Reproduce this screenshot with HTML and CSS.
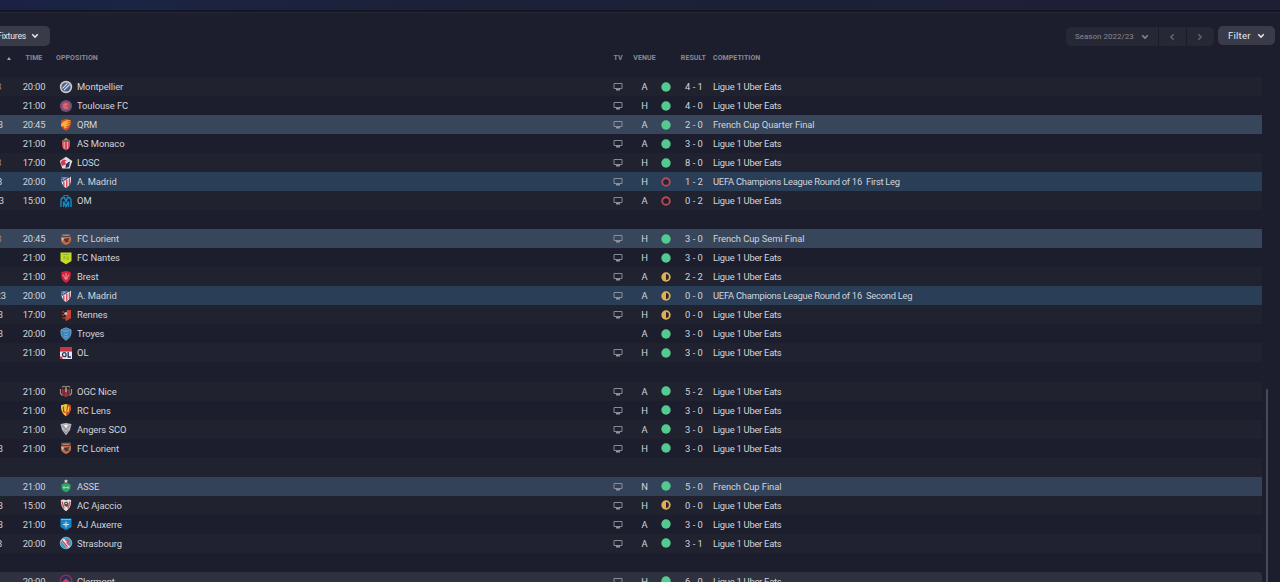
FILE: index.html
```html
<!DOCTYPE html>
<html lang="en">
<head>
<meta charset="utf-8">
<title>Fixtures</title>
<link rel="stylesheet" href="styles.css">
</head>
<body>
<svg class="defs" aria-hidden="true">
<symbol id="tv" viewBox="0 0 10 9"><path d="M1 1.500h8v5H1z" fill="none" stroke="#92959f" stroke-width=".9"/><path d="M3 7h4v1.500H3z" fill="#92959f"/></symbol>
<symbol id="down" viewBox="0 0 8 6"><path d="M1.200 1.300 4 4.100 6.800 1.300" fill="none" stroke="currentColor" stroke-width="1.500"/></symbol>
<symbol id="win" viewBox="0 0 10 10"><circle cx="5" cy="5" r="4.700" fill="#54ca90"/></symbol>
<symbol id="loss" viewBox="0 0 10 10"><circle cx="5" cy="5" r="3.800" fill="#1d1e2f" fill-opacity=".7" stroke="#b94a55" stroke-width="1.900"/></symbol>
<symbol id="draw" viewBox="0 0 10 10"><circle cx="5" cy="5" r="4.700" fill="#dfae55"/><path d="M5 2.100a2.900 2.900 0 0 1 0 5.800z" fill="#29252b"/></symbol>
<symbol id="mon" viewBox="0 0 14 14"><circle cx="7" cy="7" r="6.200" fill="#cfc8c3"/><circle cx="7" cy="7" r="4.600" fill="#3f628f"/><path d="m3.500 8.300 5-5M5 10.200l5.500-5.500" stroke="#e5e3e2" stroke-width="1.100"/></symbol>
<symbol id="tou" viewBox="0 0 14 14"><circle cx="7" cy="7" r="6.100" fill="#66547b"/><circle cx="7" cy="7" r="4.100" fill="#c4435b"/><path d="M5 5h4M5 5v4h4M7 5v3" fill="none" stroke="#df8c9f" stroke-width=".8"/></symbol>
<symbol id="qrm" viewBox="0 0 14 14"><path d="M2 2.500 7 .8l5 1.500c.2 5-1.200 8.600-5 10.500C3 11.200 1.600 7.500 2 2.500z" fill="#db4727"/><path d="M2 6.500C4 3 7 1.500 12 2L7.500 4.200l5 .2-6 2 5.500.1-6 2.500 3.500.5-4.500 1 .2-2.300-3 .3z" fill="#f3b53a"/></symbol>
<symbol id="mco" viewBox="0 0 14 14"><path d="M4.500 3 7 .7 9.500 3z" fill="#b79d55"/><path d="M3 3h8v5c0 2.800-2 4.500-4 5.500C5 12.500 3 10.800 3 8z" fill="#d8475a"/><path d="M5.200 5v7M8.600 5v7" stroke="#f1b2b5"/><path d="M3 3h8v1.800H3z" fill="#667050"/></symbol>
<symbol id="los" viewBox="0 0 14 14"><path d="M7 .8 13.300 5l-2.600 7.600H3.300L.7 5z" fill="#dfdce8"/><path d="m1.500 6 3-2.500L7 4l1 2-1.500 2.500L3 10z" fill="#d8384d"/><path d="m7 7 4-1.500-1 5.500-3.500 1z" fill="#293455"/><path d="m6 5 3 1-2 2z" fill="#fff"/></symbol>
<symbol id="atm" viewBox="0 0 14 14"><path d="M2.500 2 10.500 3 12 1.500v5c-.5 3-2.500 5-5 6.500-2.500-1.500-4.500-4-4.500-7z" fill="#eee7ec"/><path d="M2 1.500 9.500 3.500 3 7z" fill="#3a5495"/><path d="M4.800 6.500v5M7.800 5v7.500M10.500 3.500V10" stroke="#d64050" stroke-width="1.400"/><path d="m3.500 2.800 3 1M3.500 4.700h1.500" stroke="#dbe1f4" stroke-width=".7"/></symbol>
<symbol id="om" viewBox="0 0 14 14"><path d="M2 13V7.500C2 4.500 3.800 3.200 5.300 3.200L7 7.500l1.700-4.300C10.200 3.200 12 4.500 12 7.500V13M4.600 13V7.500L7 12.500l2.400-5V13" fill="none" stroke="#1490c8" stroke-width="1.400"/><path d="M4.500 1.500h5" stroke="#817650" stroke-width=".8"/></symbol>
<symbol id="lor" viewBox="0 0 14 14"><path d="M2 2h10v6c0 2.500-2.500 4-5 5-2.500-1-5-2.500-5-5z" fill="#c96d40"/><path d="M2 1.500h10V5H2z" fill="#57454b"/><path d="M3.500 3.200h7" stroke="#b9aaa3"/><path d="m4.500 7 6-1-1.500 2.500 1.500 1-4 1z" fill="#453a40"/><path d="m2.500 6 2.500.5L3.500 9z" fill="#e8caa5"/></symbol>
<symbol id="nan" viewBox="0 0 14 14"><path d="M1.500 1.500h11v8.500L7 13.300 1.500 10z" fill="#c6dc20"/><path d="M5 9V5l4 4V5M4 3.500h6" fill="none" stroke="#8aae26" stroke-width=".9"/></symbol>
<symbol id="bre" viewBox="0 0 14 14"><path d="M2.500 2 7 1l4.500 1c.8 5-.4 8.500-4.500 11-4.100-2.500-5.300-6-4.500-11z" fill="#d4243b"/><path d="M7 3v7M4 4.500 5.500 7M10 4.500 8.500 7M5 8h4" stroke="#f0b9bf" stroke-width=".8"/></symbol>
<symbol id="ren" viewBox="0 0 14 14"><path d="M1.500 1.500h11L12 10l-5 3.300L2 10z" fill="#242126"/><path d="M8 2h4v8l-5 3.300-1-3z" fill="#c84334"/><path d="M3 4h2M3 7h2M3.500 10h4" stroke="#a5392e" stroke-width="1.400"/><circle cx="6.800" cy="5.500" r="1.600" fill="#d4b5a5"/></symbol>
<symbol id="tro" viewBox="0 0 14 14"><path d="M2 2.800 7 .8l5 2c.5 5-1 8-5 10.500-4-2.500-5.500-5.500-5-10.500z" fill="#3a83bb" stroke="#89aac5" stroke-width=".8"/><path d="M4 4h6M5 6.500 7 8l2-1.500M5 10h4" fill="none" stroke="#75b6dc" stroke-width=".9"/></symbol>
<symbol id="ol" viewBox="0 0 14 14"><path d="M1 1h12v4.500H1z" fill="#c83545"/><path d="M1 5.500h12V13H1z" fill="#e8e8ed"/><ellipse cx="5.300" cy="8.700" rx="1.800" ry="2" fill="none" stroke="#29395b" stroke-width="1.300"/><path d="M9.200 6v5h2.800" fill="none" stroke="#29395b" stroke-width="1.400"/><path d="M1 10.500h2.500V13H1z" fill="#c83545"/></symbol>
<symbol id="nic" viewBox="0 0 14 14"><path d="M3 5h8v4.500c-.5 2-2 3-4 3.500-2-.5-3.500-1.500-4-3.500z" fill="#a3323c"/><path d="M3 3.500Q5 1 7 3.500 9 1 11 3.500M1.500 5v4.500l2 2M12.500 5v4.500l-2 2" fill="none" stroke="#a58f80" stroke-width="1.200"/><path d="M5 5v6M9 5v6" stroke="#332a30"/><path d="M7 4v4" stroke="#cbb49a" stroke-width="1.200"/></symbol>
<symbol id="len" viewBox="0 0 14 14"><path d="M2 2.200 7 1l5 1.200c.2 5-1.300 8.500-5 11-3.700-2.500-5.200-6-5-11z" fill="#efcd32"/><path d="M8 1.300 12 2.200c.2 5-1.500 9-5 11z" fill="#d43a35"/><path d="M4.500 3.500v5l2 1" fill="none" stroke="#c72e30" stroke-width="1.300"/><path d="M10 3.500 8.800 9" stroke="#f0d34a" stroke-width="1.300"/></symbol>
<symbol id="ang" viewBox="0 0 14 14"><path d="M1.500 2 7 1l5.500 1L11 8l-4 5.300L3 8z" fill="#babac0"/><path d="m3 3 4 5 4-5M4.500 8 7 11l2.500-3" fill="none" stroke="#7b7a84" stroke-width=".8"/><path d="M5 3h4L7 6z" fill="#f0f0ed"/></symbol>
<symbol id="ass" viewBox="0 0 14 14"><path d="m7 .2.700 1.300 1.500.1L8 2.600 8.400 4 7 3.300 5.600 4 6 2.600 4.800 1.600l1.500-.1z" fill="#e4ded1"/><path d="M2.500 5.500Q7 2.800 11.500 5.500v4Q10.500 12 7 13.300 3.500 12 2.500 9.500z" fill="#30a463"/><path d="M5 7v3M9 7v3M4 8.500h6" stroke="#9de0b7" stroke-width=".9"/></symbol>
<symbol id="aja" viewBox="0 0 14 14"><path d="M1.800 2.300Q4 .8 7 2.300q3-1.500 5.200 0c0 5.500-1.700 8.700-5.200 11-3.500-2.300-5.200-5.500-5.200-11z" fill="#e4dcdc"/><path d="m3 3.500 2 7M11 3.500l-2 7" stroke="#d34b50" stroke-width="1.300"/><path d="m5 4.500 3-1 1.500 2-1 3.500-3-1z" fill="#5a4a52"/><path d="M6 5.500h2" stroke="#e4dcdc" stroke-width=".8"/></symbol>
<symbol id="aux" viewBox="0 0 14 14"><path d="M1.500 1.500h11V10L7 13.300 1.500 10z" fill="#1683c2"/><path d="M2 2.500h10" stroke="#7fb9d8"/><path d="M7 4.500v6M4 7.500h6" stroke="#dceef7" stroke-width=".9"/><path d="m5.200 5.700 3.600 3.600m0-3.600L5.200 9.300" stroke="#b0d8ed" stroke-width=".6"/></symbol>
<symbol id="str" viewBox="0 0 14 14"><circle cx="7" cy="7" r="5.800" fill="#36a2cb" stroke="#8cc3d9" stroke-width=".8"/><path d="M2 4.500 8 12l3-1-6-8.500z" fill="#e9e6ec"/><path d="m3 4.500 5.500 6.500M7 4.500h2.500V6L8 7l2 2" fill="none" stroke="#d6485d" stroke-width="1.200"/></symbol>
<symbol id="cle" viewBox="0 0 14 14"><circle cx="7" cy="7" r="5.800" fill="#27315f" stroke="#9c2b56" stroke-width="1.300"/><path d="M3 8 7 4.500 11 8v3H3z" fill="#d93b51"/></symbol>
</svg>
<header class="topbar"></header>
<div class="toolbar">
  <button class="btn fixtures">Fixtures<svg class="chev"><use href="#down"/></svg></button>
  <div class="tools">
    <div class="season"><span class="pick">Season 2022/23<svg class="chev"><use href="#down"/></svg></span><span class="step"><svg class="chev left"><use href="#down"/></svg></span><span class="step"><svg class="chev right"><use href="#down"/></svg></span></div>
    <button class="btn filter">Filter<svg class="chev"><use href="#down"/></svg></button>
  </div>
</div>
<div class="grid head"><i class="sort"></i><span>TIME</span><span class="wide">OPPOSITION</span><span>TV</span><span class="venue">VENUE</span><i></i><span class="result">RESULT</span><span class="comp">COMPETITION</span></div>
<main class="rows">
<div class="grid row"><b class="d1 warm">3</b><span class="t">20:00</span><svg class="crest"><use href="#mon"/></svg><span class="name">Montpellier</span><svg class="tv"><use href="#tv"/></svg><span>A</span><svg class="dot"><use href="#win"/></svg><span>4 - 1</span><span class="comp">Ligue 1 Uber Eats</span></div>
<div class="grid row"><b></b><span class="t">21:00</span><svg class="crest"><use href="#tou"/></svg><span class="name">Toulouse FC</span><svg class="tv"><use href="#tv"/></svg><span>H</span><svg class="dot"><use href="#win"/></svg><span>4 - 0</span><span class="comp">Ligue 1 Uber Eats</span></div>
<div class="grid row cup"><b class="d3">3</b><span class="t">20:45</span><svg class="crest"><use href="#qrm"/></svg><span class="name">QRM</span><svg class="tv"><use href="#tv"/></svg><span>A</span><svg class="dot"><use href="#win"/></svg><span>2 - 0</span><span class="comp">French Cup Quarter Final</span></div>
<div class="grid row"><b></b><span class="t">21:00</span><svg class="crest"><use href="#mco"/></svg><span class="name">AS Monaco</span><svg class="tv"><use href="#tv"/></svg><span>A</span><svg class="dot"><use href="#win"/></svg><span>3 - 0</span><span class="comp">Ligue 1 Uber Eats</span></div>
<div class="grid row"><b class="d1 warm">3</b><span class="t">17:00</span><svg class="crest"><use href="#los"/></svg><span class="name">LOSC</span><svg class="tv"><use href="#tv"/></svg><span>H</span><svg class="dot"><use href="#win"/></svg><span>8 - 0</span><span class="comp">Ligue 1 Uber Eats</span></div>
<div class="grid row euro"><b class="d2">3</b><span class="t">20:00</span><svg class="crest"><use href="#atm"/></svg><span class="name">A. Madrid</span><svg class="tv"><use href="#tv"/></svg><span>H</span><svg class="dot"><use href="#loss"/></svg><span>1 - 2</span><span class="comp">UEFA Champions League Round of 16&nbsp; First Leg</span></div>
<div class="grid row"><b class="d4">3</b><span class="t">15:00</span><svg class="crest"><use href="#om"/></svg><span class="name">OM</span><svg class="tv"><use href="#tv"/></svg><span>A</span><svg class="dot"><use href="#loss"/></svg><span>0 - 2</span><span class="comp">Ligue 1 Uber Eats</span></div>
<div class="grid row"></div>
<div class="grid row cup"><b class="d1 warm">3</b><span class="t">20:45</span><svg class="crest"><use href="#lor"/></svg><span class="name">FC Lorient</span><svg class="tv"><use href="#tv"/></svg><span>H</span><svg class="dot"><use href="#win"/></svg><span>3 - 0</span><span class="comp">French Cup Semi Final</span></div>
<div class="grid row"><b></b><span class="t">21:00</span><svg class="crest"><use href="#nan"/></svg><span class="name">FC Nantes</span><svg class="tv"><use href="#tv"/></svg><span>H</span><svg class="dot"><use href="#win"/></svg><span>3 - 0</span><span class="comp">Ligue 1 Uber Eats</span></div>
<div class="grid row"><b></b><span class="t">21:00</span><svg class="crest"><use href="#bre"/></svg><span class="name">Brest</span><svg class="tv"><use href="#tv"/></svg><span>A</span><svg class="dot"><use href="#draw"/></svg><span>2 - 2</span><span class="comp">Ligue 1 Uber Eats</span></div>
<div class="grid row euro"><b class="d6">23</b><span class="t">20:00</span><svg class="crest"><use href="#atm"/></svg><span class="name">A. Madrid</span><svg class="tv"><use href="#tv"/></svg><span>A</span><svg class="dot"><use href="#draw"/></svg><span>0 - 0</span><span class="comp">UEFA Champions League Round of 16&nbsp; Second Leg</span></div>
<div class="grid row"><b class="d3">3</b><span class="t">17:00</span><svg class="crest"><use href="#ren"/></svg><span class="name">Rennes</span><svg class="tv"><use href="#tv"/></svg><span>H</span><svg class="dot"><use href="#draw"/></svg><span>0 - 0</span><span class="comp">Ligue 1 Uber Eats</span></div>
<div class="grid row"><b class="d3">3</b><span class="t">20:00</span><svg class="crest"><use href="#tro"/></svg><span class="name">Troyes</span><i></i><span>A</span><svg class="dot"><use href="#win"/></svg><span>3 - 0</span><span class="comp">Ligue 1 Uber Eats</span></div>
<div class="grid row"><b></b><span class="t">21:00</span><svg class="crest"><use href="#ol"/></svg><span class="name">OL</span><svg class="tv"><use href="#tv"/></svg><span>H</span><svg class="dot"><use href="#win"/></svg><span>3 - 0</span><span class="comp">Ligue 1 Uber Eats</span></div>
<div class="grid row"></div>
<div class="grid row"><b></b><span class="t">21:00</span><svg class="crest"><use href="#nic"/></svg><span class="name">OGC Nice</span><svg class="tv"><use href="#tv"/></svg><span>A</span><svg class="dot"><use href="#win"/></svg><span>5 - 2</span><span class="comp">Ligue 1 Uber Eats</span></div>
<div class="grid row"><b></b><span class="t">21:00</span><svg class="crest"><use href="#len"/></svg><span class="name">RC Lens</span><svg class="tv"><use href="#tv"/></svg><span>H</span><svg class="dot"><use href="#win"/></svg><span>3 - 0</span><span class="comp">Ligue 1 Uber Eats</span></div>
<div class="grid row"><b></b><span class="t">21:00</span><svg class="crest"><use href="#ang"/></svg><span class="name">Angers SCO</span><svg class="tv"><use href="#tv"/></svg><span>A</span><svg class="dot"><use href="#win"/></svg><span>3 - 0</span><span class="comp">Ligue 1 Uber Eats</span></div>
<div class="grid row"><b class="d3">3</b><span class="t">21:00</span><svg class="crest"><use href="#lor"/></svg><span class="name">FC Lorient</span><svg class="tv"><use href="#tv"/></svg><span>H</span><svg class="dot"><use href="#win"/></svg><span>3 - 0</span><span class="comp">Ligue 1 Uber Eats</span></div>
<div class="grid row"></div>
<div class="grid row cup final"><b></b><span class="t">21:00</span><svg class="crest"><use href="#ass"/></svg><span class="name">ASSE</span><svg class="tv"><use href="#tv"/></svg><span>N</span><svg class="dot"><use href="#win"/></svg><span>5 - 0</span><span class="comp">French Cup Final</span></div>
<div class="grid row"><b class="d3">3</b><span class="t">15:00</span><svg class="crest"><use href="#aja"/></svg><span class="name">AC Ajaccio</span><svg class="tv"><use href="#tv"/></svg><span>H</span><svg class="dot"><use href="#draw"/></svg><span>0 - 0</span><span class="comp">Ligue 1 Uber Eats</span></div>
<div class="grid row"><b class="d3">3</b><span class="t">21:00</span><svg class="crest"><use href="#aux"/></svg><span class="name">AJ Auxerre</span><svg class="tv"><use href="#tv"/></svg><span>A</span><svg class="dot"><use href="#win"/></svg><span>3 - 0</span><span class="comp">Ligue 1 Uber Eats</span></div>
<div class="grid row"><b class="d2">3</b><span class="t">20:00</span><svg class="crest"><use href="#str"/></svg><span class="name">Strasbourg</span><svg class="tv"><use href="#tv"/></svg><span>A</span><svg class="dot"><use href="#win"/></svg><span>3 - 1</span><span class="comp">Ligue 1 Uber Eats</span></div>
<div class="grid row"></div>
<div class="grid row next"><b></b><span class="t">20:00</span><svg class="crest"><use href="#cle"/></svg><span class="name">Clermont</span><svg class="tv"><use href="#tv"/></svg><span>H</span><svg class="dot"><use href="#win"/></svg><span>6 - 0</span><span class="comp">Ligue 1 Uber Eats</span></div>
</main>
<div class="scrollbar"></div>
</body>
</html>
```
FILE: styles.css
```css
* { box-sizing: border-box; }
body {
  margin: 0;
  height: 582px;
  overflow: hidden;
  background: #1c1e2d;
  color: #d3d4da;
  font: 9.4px/19px Roboto, "Liberation Sans", sans-serif;
}
.defs { display: none; }
svg { display: block; }
.topbar {
  height: 12px;
  background: linear-gradient(90deg, #1a2145, #1b2444 10%, #1c2139 35%, #1d1f34);
  border-bottom: 2px solid #141620;
}
.toolbar {
  height: 38px;
  border-top: 1px solid #26283a;
  padding: 13px 5px 0 0;
  display: flex;
  justify-content: space-between;
}
.btn {
  border: 0;
  margin: 0;
  color: #e6e7eb;
  background: #393b48;
  font: inherit;
  border-radius: 5px;
  display: flex;
  align-items: center;
}
.chev { width: 8px; height: 6px; flex: none; }
.fixtures {
  width: 55px;
  height: 20px;
  padding: 0 11px 0 0;
  justify-content: flex-end;
  gap: 5px;
  font-size: 8.6px;
  letter-spacing: -.2px;
  margin-left: -5px;
}
.tools { display: flex; gap: 4px; }
.filter {
  width: 57px;
  height: 19px;
  padding: 0 10px 1px;
  justify-content: space-between;
  font-size: 9.6px;
  letter-spacing: .2px;
}
.filter .chev { margin-top: 2px; }
.season {
  display: flex;
  width: 148px;
  height: 19px;
  margin-top: 1px;
  background: #262836;
  color: #858894;
  border-radius: 5px;
  font-size: 8px;
}
.pick { flex: 1; padding: 0 9px; display: flex; align-items: center; justify-content: space-between; }
.step { width: 28px; border-left: 1px solid #1a1c28; display: grid; place-items: center; color: #62656f; }
.step .chev { margin-left: -2px; }
.left { transform: rotate(90deg); }
.right { transform: rotate(-90deg); }
.grid {
  display: grid;
  grid-template-columns: 14px 40px 23px 526px 30px 23px 20px 36px 1fr;
  align-items: center;
  text-align: center;
  white-space: nowrap;
}
.head {
  height: 16px;
  line-height: 16px;
  font-size: 7px;
  font-weight: 700;
  letter-spacing: .08px;
  color: #898b96;
}
.sort {
  justify-self: end;
  margin-right: 3px;
  border: 2.500px solid transparent;
  border-top: 0;
  border-bottom: 3px solid #a6a8b0;
}
.wide { grid-column: span 2; text-align: left; padding-left: 2px; }
.head .result { text-align: right; padding-right: 6px; }
.rows { width: 1262px; padding-top: 11px; }
.row { height: 19.040px; }
.row:nth-child(odd) { background: #202230; }
.row.cup { background: #38465b; }
.row.euro { background: #2a3e58; }
.row.final { background: #334159; }
.row.next { background: #2f313e; border-top-right-radius: 4px; }
.row b { font-weight: 400; direction: rtl; }
.d1 { width: 1.500px; }
.d2 { width: 2.300px; }
.d3 { width: 3px; }
.d4 { width: 4px; }
.d6 { width: 6px; }
.row .warm { color: #b98268; }
.crest { width: 14px; height: 14px; justify-self: center; }
.tv { width: 10px; height: 9px; justify-self: center; }
.dot { width: 10px; height: 10px; justify-self: center; }
.t { letter-spacing: -.12px; }
.name { text-align: left; letter-spacing: -.07px; }
.comp { text-align: left; padding-left: 1px; }
.row .comp { letter-spacing: -.26px; }
.row.cup .comp { letter-spacing: -.07px; }
.scrollbar {
  position: absolute;
  top: 389px;
  left: 1266px;
  width: 2px;
  height: 193px;
  background: #484a56;
  border-radius: 2px 2px 0 0;
}
```
